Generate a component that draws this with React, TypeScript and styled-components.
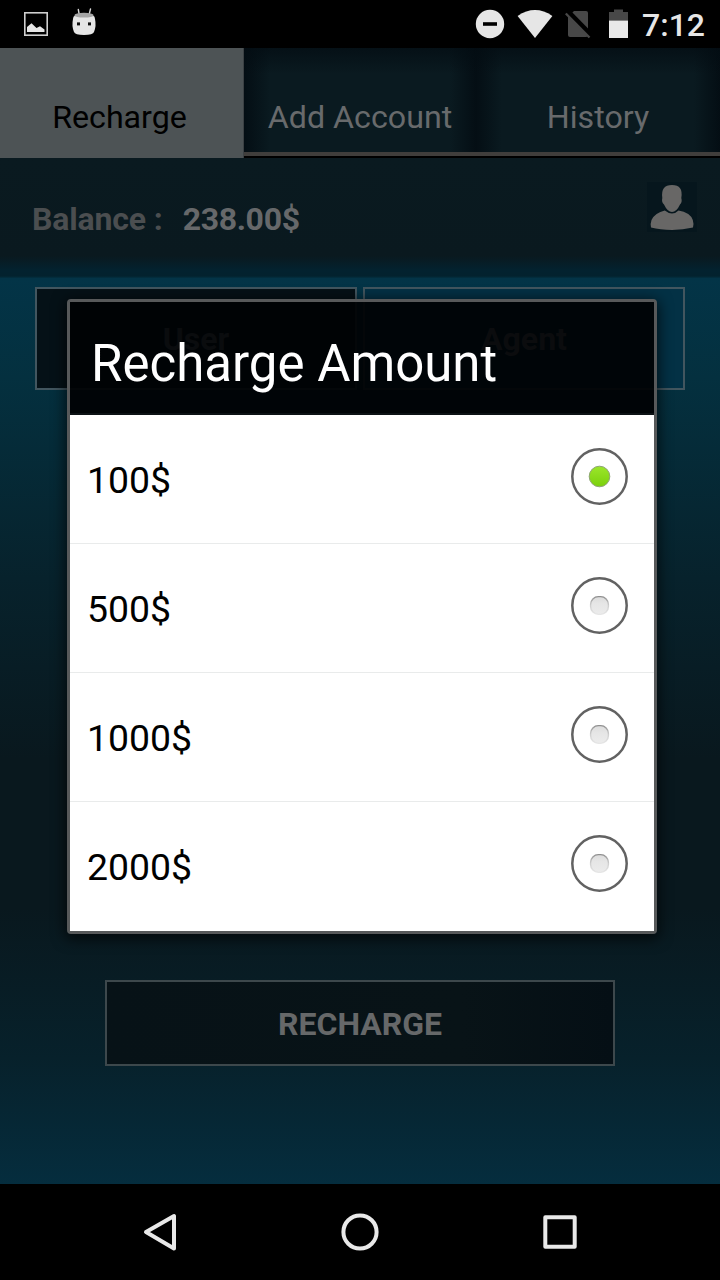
import React from 'react';
import styled, { createGlobalStyle } from 'styled-components';

const GlobalStyle = createGlobalStyle`
  * { box-sizing: border-box; }
  body { margin: 0; background: #000; font-family: Roboto, "Liberation Sans", sans-serif; }
`;

const Screen = styled.div`
  position: relative;
  display: flex;
  flex-direction: column;
  width: 720px;
  height: 1280px;
  overflow: hidden;
  background: #000;
`;

const StatusBar = styled.header`
  display: flex;
  flex: none;
  justify-content: space-between;
  height: 48px;
  background: #000;
`;

const StatusGroup = styled.div`
  display: flex;
  height: 48px;
`;

const Clock = styled.span`
  width: 80px;
  padding-left: 2px;
  color: #e6e6e6;
  font-size: 32px;
  font-weight: 500;
  line-height: 50px;
`;

const TabBar = styled.nav`
  display: flex;
  flex: none;
  height: 110px;
  background: #000;
`;

const Tab = styled.button<{ $active?: boolean; $width: number }>`
  display: flex;
  align-items: flex-start;
  justify-content: center;
  width: ${p => p.$width}px;
  height: ${p => (p.$active ? 110 : 108)}px;
  margin: 0;
  padding: ${p => (p.$active ? '28px 4px 0 0' : '28px 0 0')};
  border: 0;
  border-right: ${p => (p.$active ? '1px solid #3c4144' : '0')};
  border-bottom: ${p => (p.$active ? '0' : '4px solid #403e3c')};
  background: ${p =>
    p.$active
      ? '#4d5355'
      : 'linear-gradient(rgba(3, 12, 18, 0.7), transparent 26px), linear-gradient(90deg, #040e14, #0a1a20 26px, #0a1a20 calc(100% - 26px), #040e14)'};
  color: ${p => (p.$active ? '#000' : '#686a6c')};
  font: 400 32.2px/82px Roboto, sans-serif;
`;

const BalanceBar = styled.section`
  display: flex;
  flex: none;
  align-items: flex-start;
  justify-content: space-between;
  height: 120px;
  padding: 24px 23px 0 32px;
  background: linear-gradient(#0a1a20 0, #0a191f 98px, #03222f 112px, #03222e 118px, #033041 120px);
`;

const Balance = styled.div`
  display: flex;
  gap: 20px;
  color: #66686a;
  font-size: 32px;
  font-weight: 700;
  line-height: 38px;
  padding-top: 18px;
  letter-spacing: -0.15px;
`;

const BalanceLabel = styled.span`
  color: #4b4e50;
`;

const BalanceValue = styled.span`
  letter-spacing: -0.35px;
`;

const ProfileIcon = styled.svg`
  flex: none;
  width: 50px;
  height: 50px;
  background: #06161d;
`;

const Content = styled.main`
  display: flex;
  flex: none;
  flex-direction: column;
  align-items: center;
  height: 906px;
  padding-top: 9px;
  background: linear-gradient(#033447 0, #04303f 100px, #07222c 300px, #09181e 480px, #09181e 630px, #07212b 780px, #052d3e 906px);
`;

const Segments = styled.div`
  display: flex;
  gap: 6px;
`;

const Segment = styled.button<{ $selected?: boolean }>`
  width: 322px;
  height: 103px;
  margin: 0;
  padding: 2px 0 0;
  border: 2px solid #42565f;
  background: ${p => (p.$selected ? '#051117' : '#033145')};
  color: ${p => (p.$selected ? '#a0a0a0' : '#b0a8a4')};
  font: 700 32px/97px Roboto, sans-serif;
`;

const SubmitButton = styled.button`
  width: 510px;
  height: 86px;
  margin: 590px 0 0;
  padding: 2px 0 0;
  border: 2px solid #3d484c;
  background: linear-gradient(90deg, #071217, #081317 70%, #050f15);
  color: #666869;
  font: 700 32px/80px Roboto, sans-serif;
`;

const NavBar = styled.footer`
  display: flex;
  flex: none;
  align-items: center;
  justify-content: center;
  gap: 120px;
  height: 96px;
  background: #000;
`;

const NavIcon = styled.svg`
  width: 80px;
  height: 80px;
  fill: none;
  stroke: #e9e9e9;
  stroke-width: 4;
  stroke-linejoin: round;
`;

const Dialog = styled.div`
  position: absolute;
  top: 299px;
  left: 67px;
  width: 590px;
  height: 635px;
  border: 3px solid #57595a;
  border-radius: 4px;
  box-shadow: 0 3px 14px 2px rgba(0, 0, 0, 0.65);
`;

const DialogTitle = styled.h1`
  height: 113px;
  margin: 0;
  padding: 6px 0 0 21px;
  border-bottom: 2px solid #0c1215;
  background: rgba(0, 2, 4, 0.94);
  color: #fff;
  font-size: 51px;
  font-weight: 400;
  line-height: 111px;
`;

const OptionList = styled.div`
  background: #fff;
`;

const Option = styled.label`
  display: flex;
  align-items: center;
  justify-content: space-between;
  height: 129px;
  padding: 0 24px 6px 17px;
  border-bottom: 1px solid #e9ebeb;
  &:last-child { border-bottom-color: #fff; }
`;

const Amount = styled.span`
  padding-top: 8px;
  color: #000;
  font-size: 37.4px;
  line-height: 44px;
`;

const RadioIcon = styled.svg`
  width: 60px;
  height: 60px;
`;

function Radio({ checked }: { checked: boolean }) {
  return (
    <RadioIcon viewBox="0 0 60 60">
      <defs>
        <linearGradient id="on" x1="0" y1="0" x2="0" y2="1">
          <stop offset="0" stopColor="#9be62b" />
          <stop offset="1" stopColor="#7bd00c" />
        </linearGradient>
        <linearGradient id="off" x1="0" y1="0" x2="0" y2="1">
          <stop offset="0" stopColor="#dcdcdc" />
          <stop offset="0.4" stopColor="#e6e6e6" />
          <stop offset="1" stopColor="#ececec" />
        </linearGradient>
        <linearGradient id="rim" x1="0" y1="0" x2="0" y2="1">
          <stop offset="0" stopColor="#8f8f8f" />
          <stop offset="0.5" stopColor="#cfcfcf" />
          <stop offset="1" stopColor="#e6e6e6" />
        </linearGradient>
      </defs>
      <circle cx="29.5" cy="30.5" r="27.2" fill="#fff" stroke="#626262" strokeWidth="2.5" />
      {checked ? (
        <circle cx="29.5" cy="30.5" r="10.3" fill="url(#on)" stroke="#8da373" strokeWidth="1" />
      ) : (
        <rect x="20.6" y="21.6" width="17.8" height="17.8" rx="7.8" fill="url(#off)" stroke="url(#rim)" strokeWidth="1.4" />
      )}
    </RadioIcon>
  );
}

const amounts = ['100$', '500$', '1000$', '2000$'];

export default function App() {
  return (
    <Screen>
      <GlobalStyle />
      <StatusBar>
        <StatusGroup>
          <svg width="110" height="48" viewBox="0 0 110 48">
            <rect x="24.8" y="12.8" width="22.4" height="22.4" fill="none" stroke="#cfcfcf" strokeWidth="1.6" />
            <path d="M27 32V27L31.5 23.3L36.5 28L40 26.2L44.5 29.5V32Z" fill="#e6e6e6" />
            <path d="M78.3 9.5L79.3 15M90.5 9L89 15" stroke="#d8d8d8" strokeWidth="1.4" strokeLinecap="round" />
            <path d="M73 19Q72.5 14 84 14Q95.5 14 95 19Q96.5 26 94 32Q93 35 84 35Q75 35 74 32Q71.5 26 73 19Z" fill="#e6e6e6" />
            <ellipse cx="84" cy="15.2" rx="9.6" ry="2.4" fill="#a5a5a5" />
            <rect x="77" y="22.4" width="3" height="3" fill="#111" />
            <rect x="88" y="22.4" width="3" height="3" fill="#111" />
          </svg>
        </StatusGroup>
        <StatusGroup>
          <svg width="180" height="48" viewBox="460 0 180 48">
            <circle cx="490" cy="24" r="14.2" fill="#e6e6e6" />
            <path d="M483 24H497" stroke="#000" strokeWidth="3.6" />
            <path d="M517.6 16Q535 4.2 552.4 16L535 38Z" fill="#e6e6e6" />
            <path d="M574 11H586Q588 11 588 13V35Q588 37 586 37H570Q568 37 568 35V17Z" fill="#484848" />
            <path d="M567.5 11.5L592 36.5" stroke="#000" strokeWidth="5.5" />
            <path d="M565.8 13.5L589.5 37.5" stroke="#484848" strokeWidth="2.3" />
            <path d="M614 9.5H623V12H628V20.5H609V12H614Z" fill="#484848" />
            <path d="M609 20.5H628V38H609Z" fill="#e9e9e9" />
          </svg>
          <Clock>7:12</Clock>
        </StatusGroup>
      </StatusBar>
      <TabBar>
        <Tab $active $width={244}>Recharge</Tab>
        <Tab $width={232}>Add Account</Tab>
        <Tab $width={244}>History</Tab>
      </TabBar>
      <BalanceBar>
        <Balance>
          <BalanceLabel>Balance :</BalanceLabel>
          <BalanceValue>238.00$</BalanceValue>
        </Balance>
        <ProfileIcon viewBox="0 0 50 50">
          <path d="M15.3 16Q13.5 3 25 3Q36.5 3 34.3 16Q35.5 20 33 22.5Q29.5 30 25 30Q20.5 30 17 22.5Q14.3 20 15.3 16Z" fill="#686766" />
          <path d="M17.8 28.6Q21 31.4 25 31.4Q29 31.4 31.5 28.6Q43 30.5 45.8 38Q47 41.5 46 45.6Q36 48 25 48Q13 48 4 45.6Q3.2 41.5 4.5 38Q8 31 17.8 28.6Z" fill="#686766" />
        </ProfileIcon>
      </BalanceBar>
      <Content>
        <Segments>
          <Segment $selected>User</Segment>
          <Segment>Agent</Segment>
        </Segments>
        <SubmitButton>RECHARGE</SubmitButton>
      </Content>
      <NavBar>
        <NavIcon viewBox="0 0 80 80"><path d="M26 40L54 24V56.5Z" /></NavIcon>
        <NavIcon viewBox="0 0 80 80"><circle cx="40" cy="40" r="16.6" /></NavIcon>
        <NavIcon viewBox="0 0 80 80"><rect x="25.3" y="25.3" width="29.4" height="29.4" /></NavIcon>
      </NavBar>
      <Dialog role="dialog">
        <DialogTitle>Recharge Amount</DialogTitle>
        <OptionList>
          {amounts.map((amount, i) => (
            <Option key={amount}>
              <Amount>{amount}</Amount>
              <Radio checked={i === 0} />
            </Option>
          ))}
        </OptionList>
      </Dialog>
    </Screen>
  );
}
